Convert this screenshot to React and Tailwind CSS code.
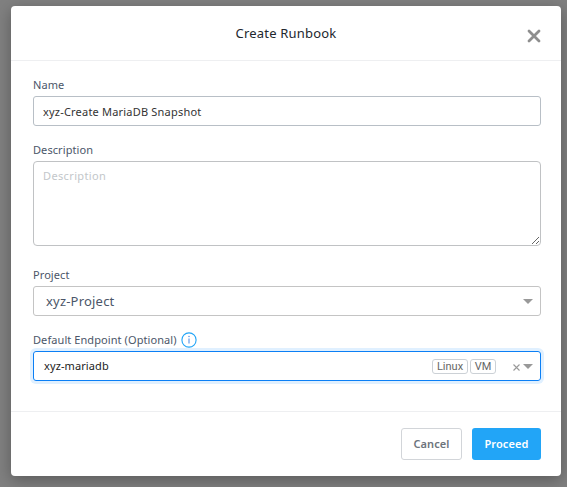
import React from "react";

function Label({ children, className = "" }) {
  return (
    <div className={`flex h-4 items-center text-[11px] leading-4 tracking-[0.08px] text-[#4b5669] ${className}`}>
      {children}
    </div>
  );
}

function Caret() {
  return (
    <svg width="10" height="5" viewBox="0 0 10 5" className="shrink-0">
      <path d="M0 0h10L5 5z" fill="#999" />
    </svg>
  );
}

function Tag({ children, className = "" }) {
  return (
    <span
      className={`flex h-[15px] items-center justify-center rounded-[3px] border border-[#ccd1d6] font-['Roboto',sans-serif] text-[11px] leading-none text-[#666] ${className}`}
    >
      {children}
    </span>
  );
}

export default function App() {
  return (
    <div className="h-[487px] w-[567px] overflow-hidden bg-[#808080] pl-[11px] pt-[6px] font-['Noto_Sans','Open_Sans',sans-serif]">
      <div className="flex h-[470px] w-[550px] flex-col rounded-[4px] bg-white shadow-[0_4px_16px_rgba(0,0,0,0.3)]">
        <header className="grid h-[55px] shrink-0 grid-cols-[1fr_auto_1fr] items-center border-b border-[#eeeff1] pl-5 pr-5">
          <span />
          <h1 className="text-[13px] leading-5 tracking-[0.2px] text-[#22272e]">Create Runbook</h1>
          <button className="mt-[5px] justify-self-end" aria-label="Close">
            <svg width="14" height="14" viewBox="0 0 14 14">
              <path d="M2 2l10 10M12 2L2 12" stroke="#8e8e8e" strokeWidth="2.8" strokeLinecap="round" />
            </svg>
          </button>
        </header>

        <main className="flex h-[350px] shrink-0 flex-col pl-[22px] pr-5 pt-[16px]">
          <Label>Name</Label>
          <input
            readOnly
            value="xyz-Create MariaDB Snapshot"
            className="mt-[3px] h-[30px] w-full rounded-[3px] border border-[#b8bfc6] px-[9px] pt-px text-[11px] tracking-[0.2px] text-[#333] outline-none"
          />
          <Label className="mt-4">Description</Label>
          <textarea
            readOnly
            placeholder="Description"
            className="mt-[3px] h-[85px] w-full shrink-0 resize rounded-[4px] border border-[#c0c2c4] px-[9px] py-[6px] text-[11px] leading-4 tracking-[0.36px] placeholder:text-[#c3c7ca] outline-none"
          />
          <Label className="mt-[21px]">Project</Label>
          <div className="mt-[3px] flex h-[30px] items-center justify-between rounded-[3px] border border-[#c4c4c4] pl-3 pr-[7px]">
            <span className="text-[13px] leading-4 tracking-[0.2px] text-[#4b5669]">xyz-Project</span>
            <Caret />
          </div>
          <Label className="mt-4">
            <span>Default Endpoint (Optional)</span>
            <svg width="16" height="16" viewBox="0 0 16 16" className="ml-1 shrink-0">
              <circle cx="8" cy="8" r="7.1" fill="none" stroke="#22a5f7" strokeWidth="1.1" />
              <path d="M8 6.5v5" stroke="#5290e8" strokeWidth="1.1" />
              <circle cx="8" cy="4.4" r=".75" fill="#5290e8" />
            </svg>
          </Label>
          <div className="mt-[3px] flex h-[30px] items-center rounded-[3px] border border-[#0b7ff5] pl-[10px] pr-[7px] shadow-[0_0_0_3px_#e0f0ff]">
            <span className="text-[11px] leading-4 tracking-[0.1px] text-[#222]">xyz-mariadb</span>
            <Tag className="ml-auto w-9">Linux</Tag>
            <Tag className="ml-[2px] w-[26px]">VM</Tag>
            <svg width="7" height="7" viewBox="0 0 7 7" className="ml-[17px] mr-[3px] mt-[3px]">
              <path d="M.5.5l6 6M6.5.5l-6 6" stroke="#999" strokeWidth="1.1" />
            </svg>
            <Caret />
          </div>
        </main>

        <footer className="flex h-[65px] shrink-0 items-center justify-end gap-[10px] border-t border-[#eeeff1] pr-5 text-[11px] font-semibold">
          <button className="h-8 w-[61px] rounded-[3px] border border-[#d2d5d9] tracking-[0.1px] text-[#6d747c]">Cancel</button>
          <button className="h-8 w-[69px] rounded-[3px] bg-[#22a5f7] tracking-[0.1px] text-white">Proceed</button>
        </footer>
      </div>
    </div>
  );
}
